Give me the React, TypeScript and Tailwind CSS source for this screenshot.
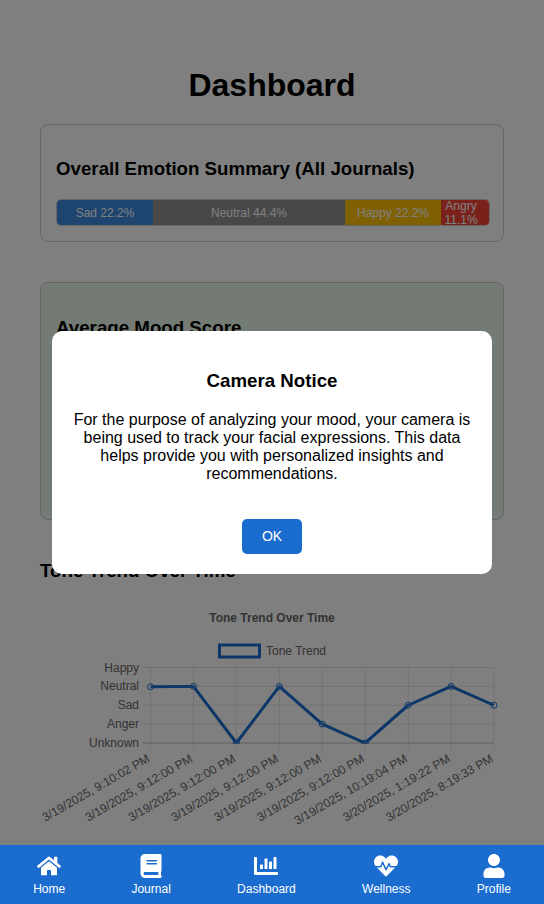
import { FaBook, FaChartBar, FaHeartbeat, FaHome, FaUser } from "react-icons/fa";

const SEGMENTS = [
  { label: "Sad 22.2%", className: "flex-[2] bg-[#3b8ae0]", textClass: "" },
  { label: "Neutral 44.4%", className: "flex-[4] bg-[#909090]", textClass: "" },
  { label: "Happy 22.2%", className: "flex-[2] bg-[#ffc107]", textClass: "" },
  { label: "Angry 11.1%", className: "flex-[1] bg-[#f44336]", textClass: "mr-2" },
];

const NAV = [
  { label: "Home", Icon: FaHome },
  { label: "Journal", Icon: FaBook },
  { label: "Dashboard", Icon: FaChartBar },
  { label: "Wellness", Icon: FaHeartbeat },
  { label: "Profile", Icon: FaUser },
];

const TONES = ["Unknown", "Anger", "Sad", "Neutral", "Happy"];
const DATES = [
  "3/19/2025, 9:10:02 PM",
  "3/19/2025, 9:12:00 PM",
  "3/19/2025, 9:12:00 PM",
  "3/19/2025, 9:12:00 PM",
  "3/19/2025, 9:12:00 PM",
  "3/19/2025, 9:12:00 PM",
  "3/19/2025, 10:19:04 PM",
  "3/20/2025, 1:19:22 PM",
  "3/20/2025, 8:19:33 PM",
];
const VALUES = [2.98, 3, 0, 3, 1, 0, 2, 3, 2];

const LEFT = 150.5;
const RIGHT = 494;
const TOP = 667.5;
const BOTTOM = 743;
const xAt = (i: number) => LEFT + ((RIGHT - LEFT) / 8) * i;
const yAt = (v: number) => BOTTOM - ((BOTTOM - TOP) / 4) * v;

function ToneChart() {
  const line = VALUES.map((v, i) => `${xAt(i)},${yAt(v)}`).join(" ");
  return (
    <svg viewBox="40 600 464 240" className="block h-[240px] w-[464px]" fontFamily="'Liberation Sans', Arial, sans-serif">
      <defs>
        <clipPath id="plot">
          <rect x={LEFT - 6} y={TOP - 6} width={RIGHT - LEFT + 12} height={BOTTOM - TOP + 7} />
        </clipPath>
      </defs>
      <text x="272" y="622" textAnchor="middle" fontSize="12" fontWeight="700" fill="#666666">
        Tone Trend Over Time
      </text>
      <rect x="219.5" y="645" width="40" height="12" fill="#ffffff" fillOpacity="0.1" stroke="#1a6dd0" strokeWidth="3" />
      <text x="266" y="655" fontSize="12" fill="#666666">Tone Trend</text>

      {DATES.map((_, i) => (
        <line key={i} x1={xAt(i)} x2={xAt(i)} y1={TOP} y2={BOTTOM + 7} stroke="#000000" strokeOpacity="0.1" />
      ))}
      {TONES.map((_, v) => (
        <line key={v} x1={LEFT - 8} x2={RIGHT} y1={yAt(v)} y2={yAt(v)} stroke="#000000" strokeOpacity={v === 0 ? 0.25 : 0.1} />
      ))}
      {TONES.map((t, v) => (
        <text key={t} x={139} y={yAt(v) + 4} textAnchor="end" fontSize="12" fill="#666666">{t}</text>
      ))}
      <g clipPath="url(#plot)">
        <polyline points={line} fill="none" stroke="#1a6dd0" strokeWidth="3" strokeLinejoin="round" />
        {VALUES.map((v, i) => (
          <circle key={i} cx={xAt(i)} cy={yAt(v)} r="3" fill="#ffffff" fillOpacity="0.1" stroke="#1a6dd0" />
        ))}
      </g>
      {DATES.map((d, i) => (
        <text
          key={i}
          transform={`translate(${xAt(i)} 761) rotate(-30)`}
          textAnchor="end"
          fontSize="12"
          fill="#666666"
        >
          {d}
        </text>
      ))}
    </svg>
  );
}

export default function App() {
  return (
    <div className="h-screen overflow-hidden bg-white font-['Liberation_Sans',Arial,sans-serif] text-black">
      <main className="px-10 pt-[67px]">
        <h1 className="text-center text-[32px] font-bold leading-[37px]">Dashboard</h1>

        <section className="mt-5 h-[118px] rounded-lg border border-[#cccccc] pl-[15px] pt-[33px]">
          <h2 className="text-[18.72px] font-bold leading-[22px]">Overall Emotion Summary (All Journals)</h2>
          <div className="mt-[19px] flex h-[27px] w-[434px] items-stretch overflow-hidden rounded-[5px] border border-[#cccccc] text-xs leading-[14px] text-white">
            {SEGMENTS.map(s => (
              <div key={s.label} className={`flex min-w-0 basis-0 items-center justify-center text-center ${s.className}`}>
                <span className={s.textClass}>{s.label}</span>
              </div>
            ))}
          </div>
        </section>

        <section className="mt-10 h-[238px] rounded-lg border border-[#cccccc] bg-[#e8f5e9] px-[15px] pt-[34px]">
          <h2 className="text-[18.72px] font-bold leading-[22px]">Average Mood Score</h2>
        </section>

        <h2 className="mt-10 text-[18.72px] font-bold leading-[22px]">Tone Trend Over Time</h2>
        <div className="mt-[18px]">
          <ToneChart />
        </div>
      </main>

      {/* Modal */}
      <div className="fixed inset-0 z-10 flex items-center justify-center bg-black/50">
        <div className="h-[243px] w-[440px] rounded-[10px] bg-white px-5 pt-[39px] text-center">
          <h3 className="text-[18.72px] font-bold leading-[22px]">Camera Notice</h3>
          <p className="mt-[19px] text-base leading-[18px]">
            For the purpose of analyzing your mood, your camera is being used to track your facial expressions. This data helps provide you with personalized insights and recommendations.
          </p>
          <button className="mt-9 h-[35px] w-[60px] rounded-[5px] bg-[#1a6ccf] text-sm text-white">OK</button>
        </div>
      </div>

      {/* Bottom nav */}
      <nav className="fixed inset-x-0 bottom-0 z-20 flex h-[59px] items-center justify-around bg-[#1a6ccf] text-white">
        {NAV.map(({ label, Icon }) => (
          <div key={label} className="flex flex-col items-center">
            <Icon className="h-6 w-6" />
            <span className="mt-1 text-xs leading-[14px]">{label}</span>
          </div>
        ))}
      </nav>
    </div>
  );
}
